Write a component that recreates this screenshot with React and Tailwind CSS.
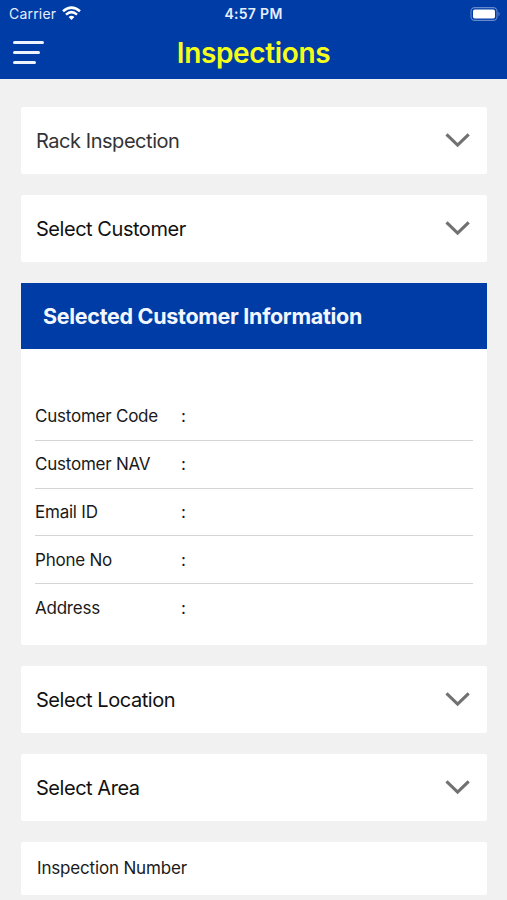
const FIELDS = ["Customer Code", "Customer NAV", "Email ID", "Phone No", "Address"];

function Chevron() {
  return (
    <svg className="h-[17px] w-[26px]" viewBox="0 0 26 17" fill="none" stroke="#717171" strokeWidth="3.1">
      <path d="M1.500 2.300 12.600 13.200 23.700 2.300" />
    </svg>
  );
}

function Select({ label, textClass }) {
  return (
    <button className="flex h-[67px] w-full items-center justify-between rounded-[2px] bg-white pr-4 pl-[15px]">
      <span className={"text-[20px] leading-6 tracking-[-0.46px] whitespace-nowrap " + textClass}>{label}</span>
      <Chevron />
    </button>
  );
}

function StatusBar() {
  return (
    <div className="grid h-[27px] grid-cols-3 items-center text-[#e6eeff]">
      <div className="flex items-center gap-1.5 pl-[9px]">
        <span className="text-[14px] leading-4 tracking-[0.2px]">Carrier</span>
        <svg className="h-[15px] w-[19px]" viewBox="0 0 19 15" fill="none" stroke="#ffffff" strokeWidth="2.5">
          <path d="M1 5.3Q9.5-2 18 5.3" />
          <path d="M4 8.6Q9.500 3.700 15 8.600" />
          <path d="M6.600 10.900Q9.500 8.500 12.400 10.900L9.500 14Z" fill="#ffffff" stroke="none" />
        </svg>
      </div>
      <span className="text-center text-[14px] leading-4 font-semibold tracking-[0.300px]">4:57 PM</span>
      <div className="flex justify-end pr-[6px]">
        <svg className="h-[14px] w-[31px]" viewBox="0 0 31 14" fill="none">
          <rect x="1" y="0.600" width="26" height="12.800" rx="3.800" stroke="#6688cc" strokeWidth="1.100" />
          <rect x="3" y="2.500" width="22" height="9" rx="1.800" fill="#ffffff" />
          <path d="M28.500 4.800Q30.800 7 28.500 9.200Z" fill="#6688cc" />
        </svg>
      </div>
    </div>
  );
}

export default function App() {
  return (
    <div className="h-[900px] w-[507px] overflow-hidden bg-[#f1f1f1] font-['Inter','Liberation_Sans',sans-serif] text-[#1a1a1a]">
      <header className="h-[79px] bg-[#003ca6]">
        <StatusBar />
        <div className="grid h-[51px] grid-cols-[100px_1fr_100px] items-center">
          <button className="flex flex-col gap-[7px] pl-[13px]" aria-label="Menu">
            <span className="h-[3px] w-[31px] rounded-full bg-[#edf4ff]" />
            <span className="h-[3px] w-[27px] rounded-full bg-[#edf4ff]" />
            <span className="h-[3px] w-[23px] rounded-full bg-[#edf4ff]" />
          </button>
          <h1 className="text-center text-[28px] leading-8 font-semibold tracking-[-0.35px] text-[#f6ff1a]">Inspections</h1>
        </div>
      </header>
      <main className="flex flex-col gap-[21px] pt-7 pr-5 pl-[21px]">
        <Select label="Rack Inspection" textClass="text-[#333333]" />
        <Select label="Select Customer" textClass="text-[#111111]" />
        <section className="h-[362px] rounded-b-[2px] bg-white">
          <h2 className="flex h-[66px] items-center bg-[#003ca6] pl-[22px] text-[21.500px] font-bold tracking-[-0.300px] text-[#f2f7ff]">
            Selected Customer Information
          </h2>
          <dl className="px-[14px] pt-[44px]">
            {FIELDS.map((field) => (
              <div key={field} className="flex h-[47.800px] items-center border-b border-[#d5d5d5] text-[17px] leading-5 last:border-0">
                <dt className="w-[146px] tracking-[-0.230px] whitespace-nowrap">{field}</dt>
                <dd>:</dd>
              </div>
            ))}
          </dl>
        </section>
        <Select label="Select Location" textClass="text-[#111111]" />
        <Select label="Select Area" textClass="text-[#111111]" />
        <div className="flex h-[53px] items-center rounded-[2px] bg-white pl-4 text-[17px] tracking-[-0.170px]">Inspection Number</div>
      </main>
    </div>
  );
}
